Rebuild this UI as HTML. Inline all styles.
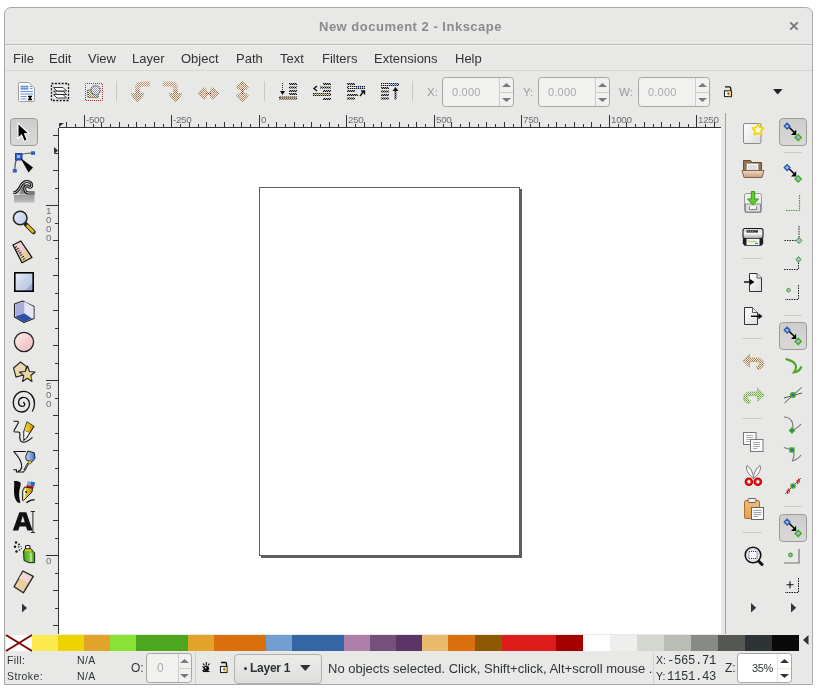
<!DOCTYPE html><html><head><meta charset="utf-8"><style>
*{margin:0;padding:0;box-sizing:border-box}
html,body{width:819px;height:690px;overflow:hidden;background:#fff;font-family:"Liberation Sans",sans-serif}
.a{position:absolute}
#win{position:absolute;left:4px;top:7px;width:809px;height:678px;background:#e8e8e7;border:1px solid #a9a9a9;border-radius:7px 7px 0 0;overflow:hidden}
.t{position:absolute;white-space:nowrap;line-height:1;will-change:transform}
svg{position:absolute;overflow:visible}
</style></head><body><div id="win"></div><div class="a" style="left:0;top:0;width:819px;height:690px"><div class="a" style="left:5px;top:44px;width:807px;height:1px;background:#b9b9b8"></div><div class="a" style="left:5px;top:45px;width:807px;height:1px;background:#f2f2f1"></div><div class="t" style="left:319px;top:20px;font-size:13px;font-weight:bold;color:#8b8b8b;letter-spacing:0.5px">New document 2 - Inkscape</div><svg style="left:789px;top:21px" width="10" height="10"><path d="M1.3 1.3L8.7 8.7M8.7 1.3L1.3 8.7" stroke="#737373" stroke-width="1.7"/></svg><div class="t" style="left:12.5px;top:52px;font-size:13px;color:#333">File</div><div class="t" style="left:48.5px;top:52px;font-size:13px;color:#333">Edit</div><div class="t" style="left:88.3px;top:52px;font-size:13px;color:#333">View</div><div class="t" style="left:132px;top:52px;font-size:13px;color:#333">Layer</div><div class="t" style="left:181px;top:52px;font-size:13px;color:#333">Object</div><div class="t" style="left:236px;top:52px;font-size:13px;color:#333">Path</div><div class="t" style="left:280px;top:52px;font-size:13px;color:#333">Text</div><div class="t" style="left:322px;top:52px;font-size:13px;color:#333">Filters</div><div class="t" style="left:374px;top:52px;font-size:13px;color:#333">Extensions</div><div class="t" style="left:455px;top:52px;font-size:13px;color:#333">Help</div><div class="a" style="left:5px;top:70px;width:807px;height:1px;background:#d6d6d5"></div><svg width="0" height="0" style="position:absolute"><defs>
<pattern id="stA" width="2" height="2" patternUnits="userSpaceOnUse"><rect width="2" height="2" fill="#f2eee8"/><rect width="1" height="1" fill="#9a7a48"/><rect x="1" y="1" width="1" height="1" fill="#b08a50"/></pattern>
<pattern id="stB" width="2" height="2" patternUnits="userSpaceOnUse"><rect width="2" height="2" fill="#f4f0ec"/><rect width="1" height="1" fill="#c89878"/><rect x="1" y="1" width="1" height="1" fill="#b09060"/></pattern>
<pattern id="stR" width="2" height="2" patternUnits="userSpaceOnUse"><rect width="2" height="2" fill="#f4f0ec"/><rect width="1" height="1" fill="#901818"/><rect x="1" y="1" width="1" height="1" fill="#c08030"/></pattern>
<pattern id="stYw" width="2" height="2" patternUnits="userSpaceOnUse"><rect width="2" height="2" fill="#fafafa"/><rect width="1" height="1" fill="#b09030"/><rect x="1" y="1" width="1" height="1" fill="#8a7a50"/></pattern>
<pattern id="stZw" width="2" height="2" patternUnits="userSpaceOnUse"><rect width="2" height="2" fill="#fafafa"/><rect width="1" height="1" fill="#9a9aa8"/><rect x="1" y="1" width="1" height="1" fill="#a0a0c0"/></pattern>
<pattern id="stO" width="2" height="2" patternUnits="userSpaceOnUse"><rect width="1" height="1" fill="#c98a2e"/><rect x="1" y="1" width="1" height="1" fill="#d9a060"/></pattern>
<pattern id="stW" width="2" height="2" patternUnits="userSpaceOnUse"><rect width="1" height="1" fill="#e8d0c0"/><rect x="1" y="1" width="1" height="1" fill="#f8f0ea"/></pattern>
<pattern id="stK" width="2" height="2" patternUnits="userSpaceOnUse"><rect width="2" height="2" fill="#a8a8a8"/><rect width="1" height="1" fill="#111"/><rect x="1" y="1" width="1" height="1" fill="#111"/></pattern><pattern id="stYl" width="2" height="1" patternUnits="userSpaceOnUse"><rect width="1" height="1" fill="#9a8040"/><rect x="1" width="1" height="1" fill="#f8f4ec"/></pattern><pattern id="stBl" width="2" height="1" patternUnits="userSpaceOnUse"><rect width="1" height="1" fill="#3a70d0"/><rect x="1" width="1" height="1" fill="#f4f4f4"/></pattern>
<pattern id="stY" width="2" height="2" patternUnits="userSpaceOnUse"><rect width="1" height="1" fill="#333"/><rect x="1" y="1" width="1" height="1" fill="#c8a040"/></pattern>
<linearGradient id="gBtn" x1="0" y1="0" x2="0" y2="1"><stop offset="0" stop-color="#cfcfce"/><stop offset="1" stop-color="#dcdcdb"/></linearGradient>
</defs></svg><svg style="left:17px;top:81px" width="19" height="21" viewBox="0 0 19 21">
<path d="M1.5 2.5Q1.5 1.5 2.5 1.5H12L17.5 7V19.5Q17.5 20.5 16.5 20.5H2.5Q1.5 20.5 1.5 19.5Z" fill="#fbfbfb" stroke="#a0a0a0"/>
<rect x="3.5" y="4.5" width="8" height="4.5" fill="#a8c4ec"/>
<path d="M4 5.5H11M4 7.5H11" stroke="#4a7ad0" stroke-width="0.9" stroke-dasharray="2,0.6"/>
<path d="M13 5.5H15M13 7.5H15.5" stroke="#5a88d8" stroke-width="0.9"/>
<path d="M3.5 10.5H16M3.5 13H16M3.5 15.5H9.5M3.5 18H9.5" stroke="#6a98e0" stroke-width="1.1"/>
<path d="M11 15.5H15M11 18.5H15M12 15.5L14 18.5M14 15.5L12 18.5" stroke="#000" stroke-width="1.3"/>
</svg><svg style="left:50px;top:82px" width="20" height="20" viewBox="0 0 20 20">
<rect x="1.5" y="1.5" width="17" height="17" fill="none" stroke="#111" stroke-width="1.3" stroke-dasharray="2,1.4"/>
<path d="M3.5 12.5L13 12.5L16.5 16L7 16Z" fill="#fff" stroke="#222" stroke-width="0.9"/>
<path d="M3.5 9L13 9L16.5 12.5L7 12.5Z" fill="#eee" stroke="#222" stroke-width="0.9"/>
<path d="M3.5 5.5L13 5.5L16.5 9L7 9Z" fill="#fff" stroke="#222" stroke-width="0.9"/>
</svg><svg style="left:83px;top:81px" width="22" height="22" viewBox="0 0 22 22">
<rect x="2.5" y="2.5" width="17" height="17" fill="none" stroke="#b83030" stroke-width="1" stroke-dasharray="1,1" stroke-dashoffset="0.5"/>
<path d="M4.5 9.5L7.5 8.5L12 11.5L15.5 13.5L15 16.5H5Z" fill="url(#stYw)" stroke="#333" stroke-width="1" stroke-dasharray="1,1"/>
<circle cx="12.7" cy="9.2" r="4.6" fill="url(#stZw)" stroke="#333" stroke-width="1.1" stroke-dasharray="1,1"/>
</svg><div class="a" style="left:116px;top:81px;width:1px;height:20px;background:#c8c8c7"></div><svg style="left:128px;top:78px" width="24" height="26" viewBox="0 0 24 26"><path d="M7 15V10C7 6 10 3.5 14 3.5H22V8.5H15C13.2 8.5 12 9.5 12 11V15Z" fill="url(#stB)"/><path d="M9.5 11v4" stroke="url(#stR)" stroke-width="2"/><path d="M3 15H16V17L9.5 24.5L3 17Z" fill="url(#stA)"/></svg><svg style="left:160px;top:78px" width="24" height="26" viewBox="0 0 24 26"><g transform="translate(25,0) scale(-1,1)"><path d="M7 15V10C7 6 10 3.5 14 3.5H22V8.5H15C13.2 8.5 12 9.5 12 11V15Z" fill="url(#stB)"/><path d="M9.5 11v4" stroke="url(#stR)" stroke-width="2"/><path d="M3 15H16V17L9.5 24.5L3 17Z" fill="url(#stA)"/></g></svg><svg style="left:196px;top:85px" width="25" height="17" viewBox="0 0 25 17">
<path d="M1.5 8.5L8 2L11 5V12L8 15Z" fill="url(#stA)"/><path d="M23.5 8.5L17 2L14 5V12L17 15Z" fill="url(#stA)"/>
<path d="M4.5 8.5L8 5L10 7V10L8 12Z" fill="url(#stB)"/><path d="M20.5 8.5L17 5L15 7V10L17 12Z" fill="url(#stB)"/>
<path d="M10 8.5H15" stroke="url(#stR)" stroke-width="3"/>
</svg><svg style="left:234px;top:79px" width="17" height="25" viewBox="0 0 17 25">
<path d="M8.5 1.5L15 8L12 11H5L2 8Z" fill="url(#stA)"/><path d="M8.5 23.5L15 17L12 14H5L2 17Z" fill="url(#stA)"/>
<path d="M8.5 4.5L12 8L10 10H7L5 8Z" fill="url(#stB)"/><path d="M8.5 20.5L12 17L10 15H7L5 17Z" fill="url(#stB)"/>
<path d="M8.5 10V15" stroke="url(#stR)" stroke-width="3"/>
</svg><div class="a" style="left:264px;top:81px;width:1px;height:20px;background:#c8c8c7"></div><svg style="left:0;top:0" width="819" height="120"><rect x="289" y="83" width="8" height="2" fill="url(#stK)"/><rect x="289" y="86.5" width="8" height="2" fill="url(#stK)"/><rect x="289" y="90" width="8" height="2" fill="url(#stK)"/><rect x="289" y="93" width="8" height="2" fill="url(#stK)"/><path d="M282.5 83V91" stroke="#222" stroke-dasharray="1,1"/><path d="M280 91H285L282.5 95Z" fill="#111"/><rect x="279" y="96.5" width="18" height="3" fill="url(#stK)"/><rect x="280" y="97.5" width="16" height="1" fill="url(#stYl)"/><rect x="323" y="83" width="8" height="2" fill="url(#stK)"/><rect x="320" y="86.5" width="11" height="2" fill="url(#stK)"/><rect x="323" y="90" width="8" height="2" fill="url(#stK)"/><rect x="323" y="98" width="8" height="2" fill="url(#stK)"/><path d="M317 86L314 88.5L317 91" fill="none" stroke="#111" stroke-width="1.4"/><rect x="313" y="93" width="18" height="3" fill="url(#stK)"/><rect x="314" y="94" width="16" height="1" fill="url(#stYl)"/><rect x="347" y="83" width="8" height="2" fill="url(#stK)"/><rect x="347" y="90" width="8" height="2" fill="url(#stK)"/><rect x="347" y="94" width="11" height="2" fill="url(#stK)"/><rect x="347" y="97.5" width="8" height="2" fill="url(#stK)"/><rect x="347" y="86" width="18" height="3" fill="url(#stK)"/><rect x="348" y="87" width="16" height="1" fill="#f4f4f4"/><rect x="356" y="87" width="7" height="1" fill="url(#stBl)"/><path d="M360 96L363.5 91.5M361 91H364.5V94.5" fill="none" stroke="#111" stroke-width="1.4"/><rect x="381" y="83" width="18" height="3" fill="url(#stK)"/><rect x="382" y="84" width="16" height="1" fill="#f4f4f4"/><rect x="390" y="84" width="7" height="1" fill="url(#stBl)"/><rect x="381" y="87" width="8" height="2" fill="url(#stK)"/><rect x="381" y="90.5" width="8" height="2" fill="url(#stK)"/><rect x="381" y="94" width="8" height="2" fill="url(#stK)"/><rect x="381" y="97.5" width="8" height="2" fill="url(#stK)"/><path d="M395.5 90V99.5" stroke="url(#stK)" stroke-width="2"/><path d="M392.5 91L395.5 87L398.5 91Z" fill="#111"/></svg><div class="a" style="left:412px;top:81px;width:1px;height:20px;background:#c8c8c7"></div><div class="t" style="left:427px;top:87px;font-size:11.5px;color:#9a9a9a">X:</div><div class="a" style="left:442px;top:77px;width:72px;height:30px;border:1px solid #a6a6a5;border-radius:3.5px;background:#f1f1f0"></div><div class="a" style="left:499px;top:78px;width:1px;height:28px;background:#cdcdcc"></div><div class="a" style="left:500px;top:92px;width:13px;height:1px;background:#cdcdcc"></div><div class="t" style="left:452px;top:87px;font-size:11px;color:#aaa;letter-spacing:0.2px">0.000</div><svg style="left:502px;top:83px" width="10" height="20"><path d="M0 4H9L4.5 0Z" fill="#7a7a7a"/><path d="M0 15H9L4.5 19Z" fill="#7a7a7a"/></svg><div class="t" style="left:523px;top:87px;font-size:11.5px;color:#9a9a9a">Y:</div><div class="a" style="left:538px;top:77px;width:72px;height:30px;border:1px solid #a6a6a5;border-radius:3.5px;background:#f1f1f0"></div><div class="a" style="left:595px;top:78px;width:1px;height:28px;background:#cdcdcc"></div><div class="a" style="left:596px;top:92px;width:13px;height:1px;background:#cdcdcc"></div><div class="t" style="left:548px;top:87px;font-size:11px;color:#aaa;letter-spacing:0.2px">0.000</div><svg style="left:598px;top:83px" width="10" height="20"><path d="M0 4H9L4.5 0Z" fill="#7a7a7a"/><path d="M0 15H9L4.5 19Z" fill="#7a7a7a"/></svg><div class="t" style="left:619px;top:87px;font-size:11.5px;color:#9a9a9a">W:</div><div class="a" style="left:638px;top:77px;width:72px;height:30px;border:1px solid #a6a6a5;border-radius:3.5px;background:#f1f1f0"></div><div class="a" style="left:695px;top:78px;width:1px;height:28px;background:#cdcdcc"></div><div class="a" style="left:696px;top:92px;width:13px;height:1px;background:#cdcdcc"></div><div class="t" style="left:648px;top:87px;font-size:11px;color:#aaa;letter-spacing:0.2px">0.000</div><svg style="left:698px;top:83px" width="10" height="20"><path d="M0 4H9L4.5 0Z" fill="#7a7a7a"/><path d="M0 15H9L4.5 19Z" fill="#7a7a7a"/></svg><svg style="left:722px;top:85px" width="12" height="13" viewBox="0 0 12 13">
<path d="M3 1.8H7.5C8.4 1.8 8.7 2.3 8.7 3.3V5.5" fill="none" stroke="#111" stroke-width="1.3"/>
<rect x="2.5" y="5.8" width="7" height="5.8" fill="#fff" stroke="#222" stroke-width="1.1"/>
<path d="M6.2 6.3V11.2H9V6.3Z" fill="#f0d060"/><path d="M5.3 7.8H7L6.5 9.8H5.8Z" fill="#111"/></svg><svg style="left:773px;top:89px" width="10" height="6"><path d="M0 0H9.5L4.75 5.5Z" fill="#222"/></svg><div class="a" style="left:59px;top:128px;width:662px;height:506px;background:#fff"></div><div class="a" style="left:259px;top:187px;width:263px;height:371px;background:#5e5e5e"></div><div class="a" style="left:259px;top:187px;width:261px;height:369px;background:#5e5e5e;border:1px solid #5e5e5e"></div><div class="a" style="left:260px;top:188px;width:259px;height:367px;background:#fff"></div><div class="a" style="left:520px;top:187px;width:2px;height:2px;background:#fff"></div><div class="a" style="left:259px;top:556px;width:2px;height:2px;background:#fff"></div><svg style="left:0;top:0" width="819" height="690"><path d="M66.5 122V127M75.5 124V127M84.5 115V127M93.5 124V127M101.5 122V127M110.5 124V127M119.5 122V127M128.5 124V127M136.5 122V127M145.5 124V127M154.5 122V127M163.5 124V127M171.5 115V127M180.5 124V127M189.5 122V127M198.5 124V127M206.5 122V127M215.5 124V127M224.5 122V127M233.5 124V127M241.5 122V127M250.5 124V127M259.5 115V127M268.5 124V127M276.5 122V127M285.5 124V127M294.5 122V127M303.5 124V127M311.5 122V127M320.5 124V127M329.5 122V127M338.5 124V127M346.5 115V127M355.5 124V127M364.5 122V127M373.5 124V127M381.5 122V127M390.5 124V127M399.5 122V127M408.5 124V127M416.5 122V127M425.5 124V127M434.5 115V127M443.5 124V127M451.5 122V127M460.5 124V127M469.5 122V127M478.5 124V127M486.5 122V127M495.5 124V127M504.5 122V127M513.5 124V127M521.5 115V127M530.5 124V127M539.5 122V127M548.5 124V127M556.5 122V127M565.5 124V127M574.5 122V127M583.5 124V127M591.5 122V127M600.5 124V127M609.5 115V127M618.5 124V127M626.5 122V127M635.5 124V127M644.5 122V127M653.5 124V127M661.5 122V127M670.5 124V127M679.5 122V127M688.5 124V127M696.5 115V127M705.5 124V127M714.5 122V127" stroke="#2e3436" stroke-width="1"/><path d="M59 127.5H721" stroke="#2e3436"/><path d="M58.5 128V634" stroke="#2e3436"/><path d="M53 625.5H58M55 608.5H58M53 590.5H58M55 573.5H58M46 555.5H58M55 538.5H58M53 520.5H58M55 503.5H58M53 485.5H58M55 468.5H58M53 450.5H58M55 433.5H58M53 415.5H58M55 398.5H58M46 380.5H58M55 363.5H58M53 345.5H58M55 328.5H58M53 310.5H58M55 293.5H58M53 275.5H58M55 258.5H58M53 240.5H58M55 223.5H58M46 205.5H58M55 188.5H58M53 170.5H58M55 153.5H58M53 135.5H58" stroke="#2e3436" stroke-width="1"/><path d="M59 123H64L59 127Z" fill="#2e3436"/><path d="M54 147V154L58 150.5Z" fill="#2e3436"/></svg><div class="t" style="left:85.9px;top:115px;font-size:9.8px;color:#6e6e6e;letter-spacing:-0.3px">-500</div><div class="t" style="left:172.9px;top:115px;font-size:9.8px;color:#6e6e6e;letter-spacing:-0.3px">-250</div><div class="t" style="left:260.9px;top:115px;font-size:9.8px;color:#6e6e6e;letter-spacing:-0.3px">0</div><div class="t" style="left:347.9px;top:115px;font-size:9.8px;color:#6e6e6e;letter-spacing:-0.3px">250</div><div class="t" style="left:435.9px;top:115px;font-size:9.8px;color:#6e6e6e;letter-spacing:-0.3px">500</div><div class="t" style="left:522.9px;top:115px;font-size:9.8px;color:#6e6e6e;letter-spacing:-0.3px">750</div><div class="t" style="left:610.9px;top:115px;font-size:9.8px;color:#6e6e6e;letter-spacing:-0.3px">1000</div><div class="t" style="left:697.9px;top:115px;font-size:9.8px;color:#6e6e6e;letter-spacing:-0.3px">1250</div><div class="t" style="left:46px;top:207.0px;font-size:9.8px;line-height:8.9px;color:#6e6e6e"><div style="height:8.9px">1</div><div style="height:8.9px">0</div><div style="height:8.9px">0</div><div style="height:8.9px">0</div></div><div class="t" style="left:46px;top:382.0px;font-size:9.8px;line-height:8.9px;color:#6e6e6e"><div style="height:8.9px">5</div><div style="height:8.9px">0</div><div style="height:8.9px">0</div></div><div class="t" style="left:46px;top:557.0px;font-size:9.8px;line-height:8.9px;color:#6e6e6e"><div style="height:8.9px">0</div></div><div class="a" style="left:725px;top:113px;width:1px;height:521px;background:#a2a2a1"></div><svg style="left:0;top:0" width="819" height="690"><rect x="6" y="635" width="26" height="16" fill="#fff"/><path d="M6 635L32 651M32 635L6 651" stroke="#800000" stroke-width="2"/><rect x="32" y="635" width="26" height="16" fill="#fce94f"/><rect x="58" y="635" width="26" height="16" fill="#edd400"/><rect x="84" y="635" width="26" height="16" fill="#e2a32a"/><rect x="110" y="635" width="26" height="16" fill="#8ae234"/><rect x="136" y="635" width="26" height="16" fill="#4ea61f"/><rect x="162" y="635" width="26" height="16" fill="#4ea61f"/><rect x="188" y="635" width="26" height="16" fill="#e2a32a"/><rect x="214" y="635" width="26" height="16" fill="#d9700d"/><rect x="240" y="635" width="26" height="16" fill="#d9700d"/><rect x="266" y="635" width="26" height="16" fill="#729fcf"/><rect x="292" y="635" width="26" height="16" fill="#3465a4"/><rect x="318" y="635" width="26" height="16" fill="#3465a4"/><rect x="344" y="635" width="26" height="16" fill="#ad7fa8"/><rect x="370" y="635" width="26" height="16" fill="#75507b"/><rect x="396" y="635" width="26" height="16" fill="#5c3566"/><rect x="422" y="635" width="26" height="16" fill="#e9b96e"/><rect x="448" y="635" width="27" height="16" fill="#d9700d"/><rect x="475" y="635" width="27" height="16" fill="#8f5902"/><rect x="502" y="635" width="27" height="16" fill="#de1c1c"/><rect x="529" y="635" width="27" height="16" fill="#de1c1c"/><rect x="556" y="635" width="27" height="16" fill="#a40000"/><rect x="583" y="635" width="27" height="16" fill="#ffffff"/><rect x="610" y="635" width="27" height="16" fill="#eeeeec"/><rect x="637" y="635" width="27" height="16" fill="#d3d7cf"/><rect x="664" y="635" width="27" height="16" fill="#babdb6"/><rect x="691" y="635" width="27" height="16" fill="#888a85"/><rect x="718" y="635" width="27" height="16" fill="#555753"/><rect x="745" y="635" width="27" height="16" fill="#2e3436"/><rect x="772" y="635" width="27" height="16" fill="#0a0a0a"/><path d="M808.5 635V645L803 640Z" fill="#2e3436"/></svg><svg style="left:0;top:0" width="819" height="690"><defs>
<linearGradient id="gSel" x1="0" y1="0" x2="0" y2="1"><stop offset="0" stop-color="#cdcdcc"/><stop offset="1" stop-color="#d9d9d8"/></linearGradient>
<linearGradient id="gRect" x1="0" y1="0" x2="1" y2="1"><stop offset="0" stop-color="#eef0fa"/><stop offset="0.5" stop-color="#c8d4ec"/><stop offset="0.75" stop-color="#b8cce0"/><stop offset="0.76" stop-color="#a8a8d8"/><stop offset="1" stop-color="#9898d0"/></linearGradient>
<linearGradient id="gEll" x1="0" y1="0" x2="1" y2="1"><stop offset="0" stop-color="#fff4f4"/><stop offset="0.5" stop-color="#f6d0d0"/><stop offset="1" stop-color="#f0b8c0"/></linearGradient>
<linearGradient id="gLens" x1="0" y1="0" x2="1" y2="1"><stop offset="0" stop-color="#e8eefa"/><stop offset="1" stop-color="#b8c8e8"/></linearGradient>
<linearGradient id="gWave" x1="0" y1="0" x2="0" y2="1"><stop offset="0" stop-color="#6a6a6a"/><stop offset="0.5" stop-color="#8c8c8c"/><stop offset="1" stop-color="#c4c4c4"/></linearGradient>
<linearGradient id="gRul" x1="0" y1="0" x2="1" y2="1"><stop offset="0" stop-color="#f8d8d8"/><stop offset="0.55" stop-color="#f0c8c8"/><stop offset="0.56" stop-color="#e8d4a0"/><stop offset="1" stop-color="#e0c890"/></linearGradient>
<linearGradient id="gPen" x1="0" y1="0" x2="1" y2="0"><stop offset="0" stop-color="#c8d8f0"/><stop offset="1" stop-color="#4070c0"/></linearGradient>
<linearGradient id="gYel" x1="0" y1="0" x2="1" y2="0"><stop offset="0" stop-color="#f8e040"/><stop offset="1" stop-color="#c89010"/></linearGradient>
<linearGradient id="gGrn" x1="0" y1="0" x2="1" y2="0"><stop offset="0" stop-color="#306810"/><stop offset="0.5" stop-color="#70c030"/><stop offset="1" stop-color="#408a18"/></linearGradient>
<linearGradient id="gWave2" x1="0" y1="0" x2="0" y2="1"><stop offset="0" stop-color="#9c9c9c"/><stop offset="1" stop-color="#bdbdbd"/></linearGradient><linearGradient id="gWave3" x1="0" y1="0" x2="0" y2="1"><stop offset="0" stop-color="#444"/><stop offset="1" stop-color="#999"/></linearGradient><linearGradient id="gGrn2" x1="0" y1="0" x2="1" y2="0"><stop offset="0" stop-color="#4aa018"/><stop offset="0.6" stop-color="#78d040"/><stop offset="1" stop-color="#50a020"/></linearGradient></defs><rect x="10.5" y="118.5" width="27" height="27" rx="3.5" fill="url(#gSel)" stroke="#9c9c9b"/><path d="M18 123L18 138.5L21.6 135L24.2 141.5L27.2 140L24.6 133.8L29 133.6Z" fill="#000" stroke="#fff" stroke-width="1.1" stroke-linejoin="miter"/><path d="M14.8 170.5C14.8 164 16 159 18.5 156.5C21 154 26 153 33 153" fill="none" stroke="#555" stroke-width="1.2"/><rect x="15.5" y="153.5" width="6.5" height="6.5" fill="#3060c0" stroke="#2040a0"/><rect x="17" y="155" width="3" height="3" fill="#a0b8e8"/><rect x="31" y="151.3" width="4" height="3.6" fill="#3060c0"/><rect x="12.8" y="169" width="4" height="3.6" fill="#3060c0"/><path d="M20.5 158L33 167.5L28.5 172.5Z" fill="#000"/><rect x="14" y="195" width="20.5" height="7.5" fill="url(#gWave2)"/><path d="M18.5 194.5C21 191 22 186 25 183.5L26 190L28.5 194.5Z" fill="url(#gWave3)"/><path d="M13.3 192.8C17 192.8 19 189.5 20.5 186.5C22 183.5 24 181.5 27 181.6C30.5 181.7 32.3 184 31.6 186.2C31 187.8 29.5 187.6 28.5 186.5C27 185 25 186 24.8 188.5C24.6 191 26 193 29 193H34.6" fill="none" stroke="#111" stroke-width="3"/><path d="M13.3 192.8C17 192.8 19 189.5 20.5 186.5C22 183.5 24 181.5 27 181.6C30.5 181.7 32.3 184 31.6 186.2C31 187.8 29.5 187.6 28.5 186.5C27 185 25 186 24.8 188.5C24.6 191 26 193 29 193H34.6" fill="none" stroke="#f4f4f4" stroke-width="0.9"/><path d="M26 224.5L33.5 232" stroke="#222" stroke-width="4.5" stroke-linecap="round"/><path d="M27.5 226L33 231.5" stroke="#e8b818" stroke-width="2.6" stroke-linecap="round"/><circle cx="20.2" cy="218" r="6.8" fill="url(#gLens)" stroke="#222" stroke-width="1.5"/><path d="M13 245L20.8 241L32 257.5L22 262.8Z" fill="url(#gRul)" stroke="#111" stroke-width="1.3" stroke-linejoin="round"/><path d="M15 247.5l2 -1M16.3 249.5l2.5 -1.3M17.6 251.5l2 -1M18.9 253.5l2.5 -1.3M20.2 255.5l2 -1M21.5 257.5l2.5 -1.3M22.8 259.5l2 -1" stroke="#111" stroke-width="1"/><rect x="14.8" y="272.8" width="18.4" height="18.4" fill="url(#gRect)" stroke="#000" stroke-width="1.6"/><path d="M14.5 304L22.5 301L34 306.5L34 318.5L24 322.5L14.5 317Z" fill="#e8ecf8" stroke="#222" stroke-width="1.1" stroke-linejoin="round"/><path d="M15.3 304.6L24.5 301.5V314.5L15.3 316.5Z" fill="#a8acd8"/><path d="M24.5 301.5L33.4 306.8V318.3L24.5 314.5Z" fill="#e4e8f4"/><path d="M15.3 316.5L24.5 313.5L32 318.5L24 322Z" fill="#2a50a8"/><circle cx="24" cy="342" r="9.6" fill="url(#gEll)" stroke="#222" stroke-width="1.3"/><path d="M13.5 368L20.5 362L26.5 366.5L25 374.5L16 377Z" fill="#e8d8b0" stroke="#222" stroke-width="1.1"/><path d="M27.5 366L29.5 371.5L35 372L30.8 375.5L32 381.5L27.3 378.3L22.5 381.5L23.8 375.6L19.5 372L25.2 371.5Z" fill="#e8d8a8" stroke="#222" stroke-width="1.1" stroke-linejoin="round"/><path d="M28.5 377.5L31 377L31.5 380Z" fill="#f0d000"/><path d="M23 402.4C24.5 402.5 25 404 24.6 405C24 406.5 21.5 407 19.8 405.5C17.5 403.5 18.5 398 22.5 397.5C26.5 397 29.5 400 29.5 404C29.5 408.5 26 412 21.5 412C16.5 412 13.3 408 13.3 403C13.3 396 18 391.3 23.5 391.3C30 391.3 34.5 397 34.5 403.5C34.5 406.5 33.5 409.5 32.2 411.5" fill="none" stroke="#111" stroke-width="1.3"/><path d="M13.5 421.3H17.2C18.5 421.3 18.6 422.5 18 423.6L14.2 430.3C13.6 431.4 14 432 15.2 432H18.2C19.8 432 20 433.2 19.8 435C19.5 438.2 20 441.2 22.2 442C24.5 442.6 28.5 440.8 32.5 437.3" fill="none" stroke="#111" stroke-width="1.1"/><path d="M26.8 421.2L34.6 426.2L27.2 438L23.4 441.2L23.3 431.5Z" fill="#111"/><path d="M27.2 422.3L33.4 426.3L29.8 432.3L24.3 430.6Z" fill="url(#gYel)"/><path d="M24.3 430.8L29.6 432.6L25.6 438.4L24.2 439Z" fill="#f8f8f8"/><path d="M13.3 451.5H25.8M14 451.8C17.5 455.5 21 460 21.6 465C22 468.5 21 470.5 18 471.3M13.3 469.7H16.4V472H23.6L24.3 471.2" fill="none" stroke="#111" stroke-width="1.1"/><path d="M28.2 463.2L24.3 470.5" stroke="#111" stroke-width="2"/><path d="M28 463.5L24.8 469.5" stroke="#ccc" stroke-width="0.6"/><path d="M27.8 451L34.3 452.8L35 458.3L31.6 462.3L26.3 460L25.7 456.5Z" fill="url(#gPen)" stroke="#111" stroke-width="0.9" stroke-linejoin="round"/><circle cx="29.8" cy="462.3" r="1.6" fill="#f8d010" stroke="#222" stroke-width="0.5"/><path d="M14 481C16.5 480.8 19.5 481 20.6 483C21.2 485 19.3 489 19.2 493C19 497 19.5 500 20.5 502.7L18 502.7C15 500 14 496 14 491C14 487 14.5 484 14 481Z" fill="#0a0a0a"/><path d="M27.5 481.2L35 482.5L34 486.5L27 485Z" fill="#7aa0e0"/><path d="M31 481.6L35 482.5L34 486.5L31 486Z" fill="#3060c0"/><path d="M26.8 485L34 486.5L33 488.5L26.3 487Z" fill="#d01010"/><path d="M24.5 487L32.5 488.2L32 492L23.3 500.8L22.5 500.2L22.6 491Z" fill="url(#gYel)" stroke="#111" stroke-width="0.9" stroke-linejoin="round"/><path d="M23.6 491.5L26 488.3L24.3 499Z" fill="#fff"/><circle cx="26.2" cy="492" r="0.9" fill="#000"/><path d="M26.5 502.6C28.5 501 30.5 499.6 34.7 499.6" fill="none" stroke="#111" stroke-width="1.4"/><path d="M12.8 530.6L19.3 512.2H26.3L32.6 530.6H27.3L26 526.4H19.6L18.3 530.6ZM20.9 522.3H24.7L22.8 515.8Z" fill="#111" fill-rule="evenodd"/><path d="M30.8 511.5H35M32.9 511.5V532.5M30.8 532.5H35" stroke="#111" stroke-width="0.9"/><circle cx="16" cy="542.5" r="1.2" fill="#111"/><circle cx="19" cy="544.5" r="0.9" fill="#111"/><circle cx="15" cy="546.8" r="1.2" fill="#111"/><circle cx="18.5" cy="547" r="0.8" fill="#111"/><circle cx="21" cy="546.5" r="0.6" fill="#111"/><circle cx="16.5" cy="551.5" r="1.2" fill="#111"/><circle cx="19.5" cy="550" r="0.8" fill="#111"/><circle cx="21.5" cy="548.5" r="0.6" fill="#111"/><rect x="25.5" y="545.5" width="4.5" height="3.5" rx="1.2" fill="#fafafa" stroke="#111" stroke-width="1.1"/><path d="M23.5 551.2L24.8 549H31.2L33.5 551.5L34.6 553V562.7H29L24 560.5Z" fill="url(#gGrn2)" stroke="#111" stroke-width="0.9" stroke-linejoin="round"/><rect x="25" y="549.3" width="6" height="1.8" fill="#f0c020"/><path d="M31 553V562" stroke="#e8f8e0" stroke-width="1"/><path d="M22.8 571L33.3 576.3L23.3 592.8L14.1 586.7Z" fill="#e8d0a0" stroke="#222" stroke-width="1.3" stroke-linejoin="round"/><path d="M23.3 572.5L31.5 576.8L28 582.5L19 578Z" fill="#f4d8d8"/><path d="M22 603.5V612.5L27 608Z" fill="#2e3436"/></svg><svg style="left:0;top:0" width="819" height="690"><defs>
<linearGradient id="gDoc" x1="0" y1="0" x2="1" y2="1"><stop offset="0" stop-color="#ffffff"/><stop offset="1" stop-color="#dcdcdc"/></linearGradient>
<linearGradient id="gFold" x1="0" y1="0" x2="0" y2="1"><stop offset="0" stop-color="#f0dcc8"/><stop offset="1" stop-color="#c8a080"/></linearGradient>
<linearGradient id="gPrn" x1="0" y1="0" x2="0" y2="1"><stop offset="0" stop-color="#d0d0d0"/><stop offset="0.5" stop-color="#f8f8f8"/><stop offset="1" stop-color="#a0a0a0"/></linearGradient>
<linearGradient id="gClip" x1="0" y1="0" x2="0" y2="1"><stop offset="0" stop-color="#f0c080"/><stop offset="1" stop-color="#e0a050"/></linearGradient>
<pattern id="stG" width="2" height="2" patternUnits="userSpaceOnUse"><rect width="1" height="1" fill="#50b020"/><rect x="1" y="1" width="1" height="1" fill="#80c850"/></pattern>
</defs><path d="M742.5 258.5H762M742.5 338.5H762M742.5 418.5H762M742.5 532.5H762" stroke="#cacac9"/><path d="M784 152.5H802M784 506.5H802" stroke="#cacac9"/><rect x="743.5" y="123.5" width="17.5" height="20" rx="1.5" fill="url(#gDoc)" stroke="#8a8a8a"/><path d="M758 124L759.8 127.6L763.8 128.1L760.9 130.9L761.6 134.8L758 132.9L754.4 134.8L755.1 130.9L752.2 128.1L756.2 127.6Z" fill="#fffbd8" stroke="#f2d400" stroke-width="1.5" stroke-linejoin="round"/><path d="M743.5 160.5H750.5L752.5 162.5H761.5V176H743.5Z" fill="#9a7248" stroke="#6a4a28"/><rect x="746.5" y="163.5" width="12" height="9" fill="#fcfcfc" stroke="#999" stroke-width="0.8"/><path d="M748 166H757M748 168H757M748 170H757" stroke="#aaa" stroke-width="0.7"/><path d="M742 170.5H764L762 177.5H744Z" fill="url(#gFold)" stroke="#7a5838" stroke-width="0.9"/><rect x="744.5" y="193.5" width="17" height="19" rx="2" fill="#eee" stroke="#999"/><rect x="745.5" y="204" width="15" height="8" fill="#ddd" stroke="#777" stroke-width="0.8"/><path d="M749.5 206.5V209.5H756.5V206.5" fill="#fff" stroke="#666" stroke-width="0.8"/><path d="M751.3 191.5H754.7V199H758.5L753 205L747.5 199H751.3Z" fill="#60c830" stroke="#30a010" stroke-width="1"/><rect x="743" y="228.5" width="20" height="10" rx="2" fill="url(#gPrn)" stroke="#1a1a1a" stroke-width="1.1"/><rect x="746.5" y="230.2" width="11.5" height="2.4" fill="#3a3a3a"/><path d="M748 231.4h1M750 231.4h1M752 231.4h1" stroke="#aaa" stroke-width="0.8"/><path d="M742.8 238.5H763.2V243.5L761.5 245.8H744.5L742.8 243.5Z" fill="#1e1e1e"/><rect x="746.5" y="238.8" width="13" height="6.2" fill="#f4f4f4"/><path d="M748 240.5l3 1.5l3 -1l3 1.5" stroke="#9c4" stroke-width="0.9" fill="none"/><path d="M755 243.5h3" stroke="#48c" stroke-width="1"/><path d="M749.5 273.5H757L761.5 278V291.5H749.5Z" fill="url(#gDoc)" stroke="#333" stroke-width="1"/><path d="M757 273.5V278H761.5" fill="#eee" stroke="#333" stroke-width="0.8"/><path d="M744 282H751" stroke="#000" stroke-width="1.4"/><path d="M750 279L754.5 282L750 285Z" fill="#000"/><path d="M744.5 307.5H752.5L757.5 312.5V324.5H744.5Z" fill="url(#gDoc)" stroke="#333" stroke-width="1"/><path d="M752.5 307.5V312.5H757.5" fill="#eee" stroke="#333" stroke-width="0.8"/><path d="M751 316.3H759" stroke="#000" stroke-width="1.4"/><path d="M758.5 313.3L762.5 316.3L758.5 319.3Z" fill="#000"/><path d="M743 361L749.5 354V358H757C761 358 763.5 360.5 763.5 363.5C763.5 366.5 761.5 369 758 369.5L756.5 366.5C758.5 366 759.5 365 759.5 363.5C759.5 362.5 758.5 361.7 757 361.7H749.5V367.5Z" fill="url(#stA)" stroke="#c08840" stroke-width="0.9" stroke-dasharray="1,1"/><path d="M764 395L757.5 388V392H750C746 392 743.5 394.5 743.5 397.5C743.5 400.5 745.5 403 749 403.5L750.5 400.5C748.5 400 747.5 399 747.5 397.5C747.5 396.5 748.5 395.7 750 395.7H757.5V401.5Z" fill="url(#stG)" stroke="#a09070" stroke-width="0.9" stroke-dasharray="1,1"/><rect x="743.5" y="432.5" width="12.5" height="12" fill="#fcfcfc" stroke="#777" stroke-width="1"/><path d="M746.0 435.5H753.0M746.0 437.5H753.0M746.0 439.5H753.0M746.0 441.5H750.5" stroke="#999" stroke-width="0.8"/><rect x="750.5" y="439.5" width="12.5" height="12" fill="#fcfcfc" stroke="#777" stroke-width="1"/><path d="M753.0 442.5H760.0M753.0 444.5H760.0M753.0 446.5H760.0M753.0 448.5H757.5" stroke="#999" stroke-width="0.8"/><path d="M747 465.5C745.5 469 747.5 474 754 478.5C753 473 751 468 747 465.5Z" fill="#f8f8f8" stroke="#777" stroke-width="1"/><path d="M760 465.5C761.5 469 759.5 474 753 478.5C754 473 756 468 760 465.5Z" fill="#f8f8f8" stroke="#777" stroke-width="1"/><circle cx="748.9" cy="481.7" r="3" fill="#fff" stroke="#d00000" stroke-width="2.6"/><circle cx="757.8" cy="481.7" r="3" fill="#fff" stroke="#d00000" stroke-width="2.6"/><circle cx="748.9" cy="481.7" r="2.2" fill="none" stroke="#f06060" stroke-width="0.6"/><circle cx="757.8" cy="481.7" r="2.2" fill="none" stroke="#f06060" stroke-width="0.6"/><rect x="744.5" y="500.5" width="15" height="18" rx="1.5" fill="url(#gClip)" stroke="#b07020" stroke-width="1"/><rect x="748" y="498.5" width="8" height="4" rx="1" fill="#eee" stroke="#555" stroke-width="0.9"/><rect x="751.5" y="507.5" width="12" height="12" fill="#fcfcfc" stroke="#666" stroke-width="1"/><path d="M753.5 510.5H761.5M753.5 512.5H761.5M753.5 514.5H761.5M753.5 516.5H758" stroke="#888" stroke-width="0.8"/><path d="M758 560.5L762 564.5" stroke="#111" stroke-width="3" stroke-linecap="round"/><circle cx="753" cy="555" r="7.8" fill="#dfe6f2" stroke="#111" stroke-width="1.6"/><rect x="749" y="551.5" width="8" height="7" fill="#fff" stroke="#222" stroke-width="0.9" stroke-dasharray="1,1"/><path d="M751 603V612.6L756.2 607.8Z" fill="#2e3436"/><path d="M791 603V612.6L796.2 607.8Z" fill="#2e3436"/><rect x="779.5" y="118.5" width="27" height="27" rx="3.5" fill="url(#gSel)" stroke="#9c9c9b"/><path d="M787.1 123.3l2.8 2.8l-2.8 2.8l-2.8 -2.8Z" fill="#a8b8e8" stroke="#2a58b8" stroke-width="1.4"/><path d="M789.4000000000001 127.5L794.2 132.3" stroke="#000" stroke-width="1.5"/><path d="M796.2 135.0V129.8L791.0 135.0Z" fill="#000"/><path d="M798.2 134.3l3.1 3.1l-3.1 3.1l-3.1 -3.1Z" fill="#a8b0e0" stroke="#40b020" stroke-width="1.4"/><rect x="779.5" y="322.5" width="27" height="27" rx="3.5" fill="url(#gSel)" stroke="#9c9c9b"/><path d="M787.1 327.3l2.8 2.8l-2.8 2.8l-2.8 -2.8Z" fill="#a8b8e8" stroke="#2a58b8" stroke-width="1.4"/><path d="M789.4000000000001 331.5L794.2 336.3" stroke="#000" stroke-width="1.5"/><path d="M796.2 339.0V333.8L791.0 339.0Z" fill="#000"/><path d="M798.2 338.3l3.1 3.1l-3.1 3.1l-3.1 -3.1Z" fill="#a8b0e0" stroke="#40b020" stroke-width="1.4"/><rect x="779.5" y="514.5" width="27" height="27" rx="3.5" fill="url(#gSel)" stroke="#9c9c9b"/><path d="M787.1 519.3l2.8 2.8l-2.8 2.8l-2.8 -2.8Z" fill="#a8b8e8" stroke="#2a58b8" stroke-width="1.4"/><path d="M789.4000000000001 523.5L794.2 528.3" stroke="#000" stroke-width="1.5"/><path d="M796.2 531.0V525.8L791.0 531.0Z" fill="#000"/><path d="M798.2 530.3l3.1 3.1l-3.1 3.1l-3.1 -3.1Z" fill="#a8b0e0" stroke="#40b020" stroke-width="1.4"/><path d="M787.1 164.8l2.8 2.8l-2.8 2.8l-2.8 -2.8Z" fill="#a8b8e8" stroke="#2a58b8" stroke-width="1.4"/><path d="M789.4000000000001 169.0L794.2 173.8" stroke="#000" stroke-width="1.5"/><path d="M796.2 176.5V171.3L791.0 176.5Z" fill="#000"/><path d="M798.2 175.8l3.1 3.1l-3.1 3.1l-3.1 -3.1Z" fill="#a8b0e0" stroke="#40b020" stroke-width="1.4"/><path d="M799.5 195V210.5H785" fill="none" stroke="#40a020" stroke-width="1.2" stroke-dasharray="1.5,1"/><path d="M799 226V240.5H784" fill="none" stroke="#222" stroke-width="1" stroke-dasharray="1.5,1"/><path d="M799 237.5l3 3l-3 3l-3 -3Z" fill="#b0b8d8" stroke="#40a020" stroke-width="1"/><path d="M798.5 260V269.5H784" fill="none" stroke="#222" stroke-width="1" stroke-dasharray="1.5,1"/><path d="M798.5 256.5l2.5 3l-2.5 3l-2.5 -3Z" fill="#b0b8d8" stroke="#40a020" stroke-width="1"/><path d="M798.5 285V299.5H785" fill="none" stroke="#222" stroke-width="1" stroke-dasharray="1.5,1"/><circle cx="788.5" cy="290.2" r="1.8" fill="#b0b8d8" stroke="#40a020" stroke-width="1"/><path d="M785.7 359C790 360 795 362 796 366C796.5 369 795 371 794 372.3C797 372 800 370 801.5 366.5" fill="none" stroke="#3a9a10" stroke-width="2"/><path d="M785.7 359C790 360 795 362 796 366C796.5 369 795 371 794 372.3C797 372 800 370 801.5 366.5" fill="none" stroke="#70d030" stroke-width="1" stroke-dasharray="1,1.5"/><path d="M784 315.5H802" stroke="#cacac9"/><path d="M784.5 403L801.5 387.5M784 398L802 393" stroke="#555" stroke-width="1"/><circle cx="793" cy="395" r="2.3" fill="#4060c0" stroke="#40b020" stroke-width="1.5"/><path d="M784 417C790 417 795 422 792 430.5M792 430.5C795 429 799 427 801 424" fill="none" stroke="#777" stroke-width="1.1"/><path d="M792 428l2.5 2.5l-2.5 2.5l-2.5 -2.5Z" fill="#4060c0" stroke="#40b020" stroke-width="1.4"/><path d="M784 447.5L792 450M792 450C795 452 794 457 792.5 461C796 460 799 458 801 455" fill="none" stroke="#777" stroke-width="1.1"/><rect x="790" y="448" width="4" height="4" fill="#4060c0" stroke="#40b020" stroke-width="1.3"/><path d="M785 494L801 478" stroke="#666" stroke-width="1"/><path d="M787 490l1 4M788.5 488.5l1 4M797 480l1 4M798.5 478.5l1 4" stroke="#e01010" stroke-width="1.2"/><circle cx="793" cy="486" r="2" fill="#4060c0" stroke="#40b020" stroke-width="1.4"/><path d="M799 549V563H784" fill="none" stroke="#777" stroke-width="1.2"/><circle cx="790.5" cy="555" r="1.8" fill="#a0a8e0" stroke="#40b020" stroke-width="1.2"/><path d="M786.5 584.8H793.5M790 581.3V588.3" stroke="#111" stroke-width="1.1"/><path d="M798.5 578V592.5H785" fill="none" stroke="#111" stroke-width="1" stroke-dasharray="1.5,1"/></svg><div class="t" style="left:6.5px;top:655px;font-size:10.5px;color:#2e3436;letter-spacing:0.4px">Fill:</div><div class="t" style="left:6.5px;top:671px;font-size:10.5px;color:#2e3436;letter-spacing:0.4px">Stroke:</div><div class="t" style="left:76.5px;top:655px;font-size:10.5px;color:#2e3436;letter-spacing:0.4px">N/A</div><div class="t" style="left:76.5px;top:671px;font-size:10.5px;color:#2e3436;letter-spacing:0.4px">N/A</div><div class="t" style="left:131px;top:662px;font-size:12px;color:#2e3436">O:</div><div class="a" style="left:146px;top:653px;width:46px;height:30px;border:1px solid #a6a6a5;border-radius:3.5px;background:#f1f1f0"></div><div class="a" style="left:178px;top:654px;width:1px;height:28px;background:#cdcdcc"></div><div class="a" style="left:179px;top:668px;width:12px;height:1px;background:#cdcdcc"></div><div class="t" style="left:157px;top:662px;font-size:12px;color:#aaa">0</div><svg style="left:180px;top:659px" width="10" height="20"><path d="M0 4H9L4.5 0Z" fill="#7a7a7a"/><path d="M0 15H9L4.5 19Z" fill="#7a7a7a"/></svg><div class="a" style="left:195px;top:652px;width:1px;height:32px;background:#cfcfce"></div><svg style="left:200px;top:660px" width="12" height="14" viewBox="0 0 12 14">
<path d="M6.3 2V5.5M3 3.5L4.5 5.5M9.5 3.5L8 5.5M2.5 6.5L4 7.5M2.5 11L4 10" stroke="#111" stroke-width="1.2"/>
<circle cx="6.3" cy="8.5" r="2.8" fill="#111"/><circle cx="5.6" cy="7.8" r="0.8" fill="#fff"/>
<path d="M3 11.5H9.5" stroke="#111" stroke-width="1.1"/></svg><svg style="left:218px;top:660px" width="11" height="14" viewBox="0 0 11 14">
<path d="M3 2.5H7.5C8.3 2.5 8.5 3 8.5 4V6" fill="none" stroke="#111" stroke-width="1.3"/>
<rect x="2.5" y="6.5" width="6.5" height="6" fill="#fff" stroke="#222" stroke-width="1.1"/>
<path d="M6 7V12H8.5V7Z" fill="#f0d880"/><path d="M5.2 8.5H6.8L6.3 10.5H5.7Z" fill="#111"/></svg><div class="a" style="left:234px;top:654px;width:88px;height:30px;border:1px solid #b0b0af;border-radius:4px;background:linear-gradient(#ececeb,#dededd)"></div><div class="a" style="left:244px;top:667px;width:3px;height:3px;border-radius:50%;background:#2e3436"></div><div class="t" style="left:250px;top:662px;font-size:12px;font-weight:bold;color:#2e3436;letter-spacing:-0.25px">Layer 1</div><svg style="left:300px;top:665px" width="11" height="7"><path d="M0 0H10.5L5.25 6Z" fill="#2e3436"/></svg><div class="t" style="left:328px;top:662px;font-size:13px;color:#2e3436;letter-spacing:0px">No objects selected. Click, Shift+click, Alt+scroll mouse .</div><div class="a" style="left:653px;top:653px;width:1px;height:31px;background:#cfcfce"></div><div class="t" style="left:656px;top:655px;font-size:10.5px;color:#2e3436">X:</div><div class="t" style="left:656px;top:671px;font-size:10.5px;color:#2e3436">Y:</div><div class="t" style="left:667px;top:655px;font-family:&quot;Liberation Mono&quot;,monospace;font-size:12.2px;letter-spacing:-0.3px;color:#2e3436">-565.71</div><div class="t" style="left:667px;top:671px;font-family:&quot;Liberation Mono&quot;,monospace;font-size:12.2px;letter-spacing:-0.3px;color:#2e3436">1151.43</div><div class="t" style="left:725px;top:662px;font-size:12px;color:#2e3436">Z:</div><div class="a" style="left:737px;top:653px;width:55px;height:30px;border:1px solid #a6a6a5;border-radius:3.5px;background:#fff"></div><div class="a" style="left:777px;top:654px;width:1px;height:28px;background:#ece4d8"></div><div class="a" style="left:778px;top:668px;width:13px;height:1px;background:#ece4d8"></div><div class="t" style="left:737px;width:36px;text-align:right;top:662.5px;font-size:11px;letter-spacing:-0.3px;color:#2e3436">35%</div><svg style="left:780px;top:659px" width="10" height="20"><path d="M0 4H9L4.5 0Z" fill="#2e3436"/><path d="M0 15H9L4.5 19Z" fill="#2e3436"/></svg></div></body></html>
